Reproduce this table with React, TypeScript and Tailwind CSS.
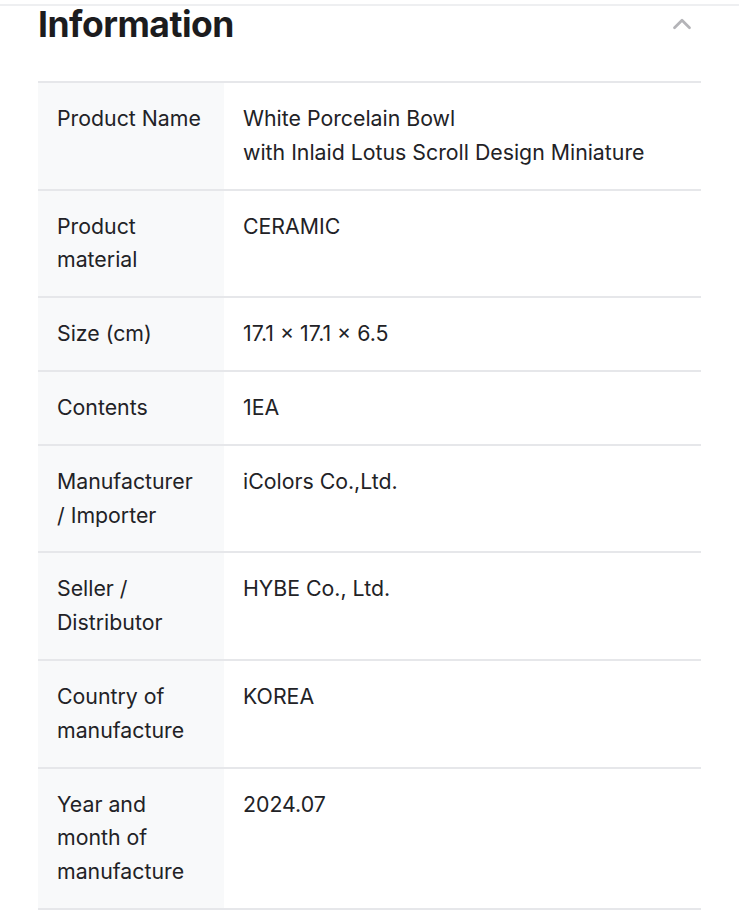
import { ChevronUp } from "lucide-react";

const rows: { label: string[]; value: string[] }[] = [
  { label: ["Product Name"], value: ["White Porcelain Bowl", "with Inlaid Lotus Scroll Design Miniature"] },
  { label: ["Product", "material"], value: ["CERAMIC"] },
  { label: ["Size (cm)"], value: ["17.1 × 17.1 × 6.5"] },
  { label: ["Contents"], value: ["1EA"] },
  { label: ["Manufacturer", "/ Importer"], value: ["iColors Co.,Ltd."] },
  { label: ["Seller /", "Distributor"], value: ["HYBE Co., Ltd."] },
  { label: ["Country of", "manufacture"], value: ["KOREA"] },
  { label: ["Year and", "month of", "manufacture"], value: ["2024.07"] },
];

export default function App() {
  return (
    <div className="min-h-screen w-full bg-white" style={{ fontFamily: "Inter, 'Noto Sans', sans-serif" }}>
      <div className="h-[4px]" />
      <div className="border-t-2 border-[#eeeff1]" />
      <div className="px-[38px]">
        <div className="flex items-center justify-between h-[38px]">
          <h2 className="text-[35.5px] font-bold leading-none tracking-[-0.5px] text-[#1c1c1e]">Information</h2>
          <ChevronUp size={30} strokeWidth={2.2} className="mr-[4px] -mt-[3px] text-[#b4b4b8]" />
        </div>
        <div className="mt-[37px] border-t-2 border-[#e6e7ea]">
          {rows.map((r, i) => (
            <div key={i} className="flex border-b-2 border-[#e6e7ea] text-[21.3px] leading-[33.8px] text-[#222226]">
              <div className="w-[186px] shrink-0 bg-[#f8f9fa] px-[19px] py-[19px]">
                {r.label.map((l, j) => (
                  <div key={j}>{l}</div>
                ))}
              </div>
              <div className="flex-1 px-[19px] py-[19px]">
                {r.value.map((v, j) => (
                  <div key={j}>{v}</div>
                ))}
              </div>
            </div>
          ))}
        </div>
      </div>
    </div>
  );
}
